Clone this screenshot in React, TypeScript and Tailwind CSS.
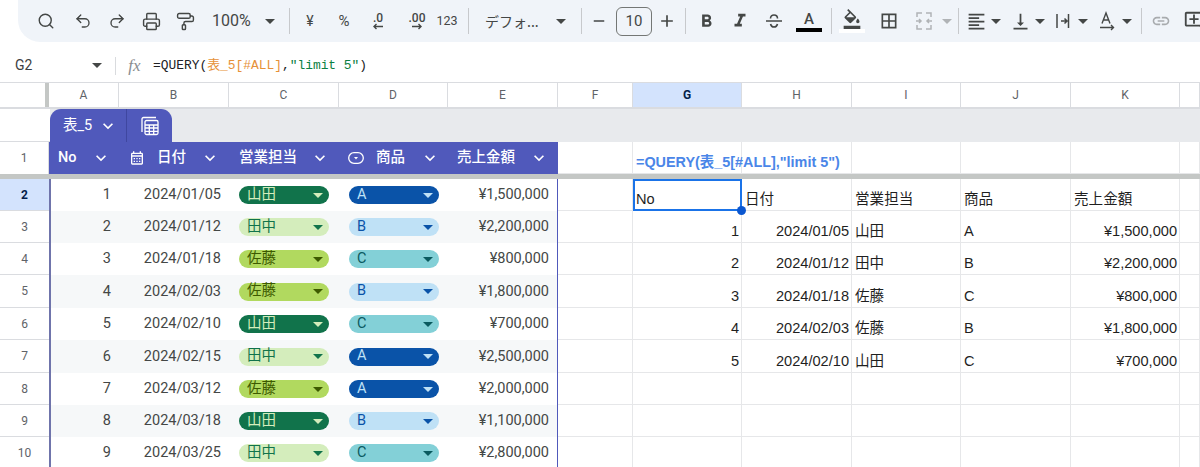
import React from "react";
import { Search, Undo2, Redo2, Printer, PaintRoller } from "lucide-react";
import {
  MdAdd, MdRemove,
  MdFormatBold, MdFormatItalic, MdFormatColorFill, MdOutlineBorderAll, MdFormatAlignLeft,
  MdVerticalAlignBottom, MdLink, MdOutlineAddComment, MdKeyboardArrowDown, MdOutlineCalendarMonth,
} from "react-icons/md";

const rowsData = [
  [1, "2024/01/05", "山田", "A", "¥1,500,000"],
  [2, "2024/01/12", "田中", "B", "¥2,200,000"],
  [3, "2024/01/18", "佐藤", "C", "¥800,000"],
  [4, "2024/02/03", "佐藤", "B", "¥1,800,000"],
  [5, "2024/02/10", "山田", "C", "¥700,000"],
  [6, "2024/02/15", "田中", "A", "¥2,500,000"],
  [7, "2024/03/12", "佐藤", "A", "¥2,000,000"],
  [8, "2024/03/18", "山田", "B", "¥1,100,000"],
  [9, "2024/03/25", "田中", "C", "¥2,800,000"],
] as const;

const pillStyles: Record<string, string> = {
  山田: "bg-[#11734b] text-[#d4edbc]",
  田中: "bg-[#d4edbc] text-[#11734b]",
  佐藤: "bg-[#b1d95f] text-[#3d5a00]",
  A: "bg-[#0a53a8] text-[#bfe1f6]",
  B: "bg-[#bfe1f6] text-[#0a53a8]",
  C: "bg-[#83d0d7] text-[#0a5a5f]",
};
const heights = ["h-[32px]", "h-[32px]", "h-[32px]", "h-[33px]", "h-[32px]", "h-[33px]", "h-[32px]", "h-[32px]", "h-[32px]"];

const Sep = ({ ml }: { ml: string }) => <div className={`w-px h-[26px] bg-[#c7c9cc] shrink-0 ${ml}`} />;
const Caret = ({ cls = "w-[18px]" }: { cls?: string }) => (
  <div className={`${cls} flex justify-center shrink-0 text-[#444746]`}>
    <div className="w-0 h-0 border-l-[5px] border-r-[5px] border-t-[5px] border-l-transparent border-r-transparent border-t-current" />
  </div>
);
const Ico = ({ children, w = "w-[34px]", ml = "" }: { children: React.ReactNode; w?: string; ml?: string }) => (
  <div className={`${w} ${ml} flex items-center justify-center shrink-0 text-[#444746]`}>{children}</div>
);

function Toolbar() {
  return (
    <div className="h-[47px] pl-[18px]">
      <div className="h-[42px] bg-[#f0f4f9] rounded-bl-[22px] pl-[11px] flex items-center overflow-hidden text-[#444746]">
        <Ico><Search size={18} strokeWidth={1.9} /></Ico>
        <Ico ml="ml-[3px]"><Undo2 size={18} strokeWidth={1.8} /></Ico>
        <Ico><Redo2 size={18} strokeWidth={1.8} /></Ico>
        <Ico><Printer size={19} strokeWidth={1.8} /></Ico>
        <Ico><PaintRoller size={19} strokeWidth={1.8} /></Ico>
        <div className="w-[58px] pl-[10px] text-[16px] shrink-0">100%</div>
        <Caret cls="w-[20px]" />
        <Sep ml="ml-[9px]" />
        <Ico ml="ml-[3px]"><span className="text-[14px]">¥</span></Ico>
        <Ico><span className="text-[15px]">%</span></Ico>
        <Ico>
          <div className="flex flex-col items-center leading-[10px] text-[12px] font-medium">
            <span>.0</span>
            <svg width="14" height="7" viewBox="0 0 14 7"><path d="M12 3.5H3M5.5 1L3 3.5 5.5 6" fill="none" stroke="currentColor" strokeWidth="1.4" /></svg>
          </div>
        </Ico>
        <Ico ml="ml-[5px]">
          <div className="flex flex-col items-center leading-[10px] text-[12px] font-medium">
            <span>.00</span>
            <svg width="14" height="7" viewBox="0 0 14 7"><path d="M2 3.5h9M8.5 1L11 3.5 8.5 6" fill="none" stroke="currentColor" strokeWidth="1.4" /></svg>
          </div>
        </Ico>
        <Ico w="w-[26px]"><span className="text-[12.5px]">123</span></Ico>
        <Sep ml="ml-[8px]" />
        <div className="w-[57px] ml-[16px] text-[14px] shrink-0 whitespace-nowrap font-['Noto_Sans_CJK_JP',sans-serif]">デフォ...</div>
        <Caret cls="w-[20px] ml-[9px]" />
        <Sep ml="ml-[10px]" />
        <Ico><MdRemove size={18} /></Ico>
        <div className="w-[36px] h-[29px] border border-[#747775] rounded-[6px] flex items-center justify-center text-[15px] shrink-0">10</div>
        <Ico w="w-[30px]"><MdAdd size={20} /></Ico>
        <Sep ml="ml-[3px]" />
        <Ico ml="ml-[3px]"><MdFormatBold size={21} /></Ico>
        <Ico><MdFormatItalic size={22} /></Ico>
        <Ico>
          <svg width="18" height="18" viewBox="0 0 18 18" fill="none" stroke="currentColor" strokeWidth="1.6">
            <path d="M1 9h16M5.500 6.500C5.500 4 7 3 9 3s3.500 1 3.500 3.500M5.500 12C6 14 7.300 15 9 15s3-1 3.500-3" />
          </svg>
        </Ico>
        <Ico ml="ml-px">
          <div className="flex flex-col items-center w-[26px]">
            <span className="text-[15px] leading-[17px] font-medium">A</span>
            <div className="w-[26px] h-[4px] bg-black" />
          </div>
        </Ico>
        <Sep ml="ml-[5px]" />
        <Ico ml="ml-[3px]">
          <div className="flex flex-col items-center w-[26px]">
            <MdFormatColorFill size={20} />
            <div className="w-[26px] h-[4px] bg-white" />
          </div>
        </Ico>
        <Ico ml="ml-[3px]"><MdOutlineBorderAll size={20} /></Ico>
        <Ico ml="ml-px">
          <svg width="18" height="18" viewBox="0 0 18 18" fill="none" stroke="#b0b3b6" strokeWidth="1.5">
            <path d="M7 1H2v4M11 1h5v4M7 17H2v-4M11 17h5v-4M1 9h5M4 7l2 2-2 2M17 9h-5M14 7l-2 2 2 2" />
          </svg>
        </Ico>
        <Caret cls="w-[20px] -ml-[4px] text-[#b0b3b6]" />
        <Sep ml="ml-px" />
        <Ico w="w-[22px]" ml="ml-[6px]"><MdFormatAlignLeft size={21} /></Ico>
        <Caret />
        <Ico w="w-[22px]" ml="ml-[4px]"><MdVerticalAlignBottom size={21} /></Ico>
        <Caret />
        <Ico w="w-[22px]" ml="ml-[3px]">
          <svg width="18" height="18" viewBox="0 0 18 18" fill="none" stroke="currentColor" strokeWidth="1.5">
            <path d="M3 2v14M14.500 2v14M7 9h6M10.500 6.500L13 9l-2.500 2.500" />
          </svg>
        </Ico>
        <Caret />
        <Ico w="w-[22px]" ml="ml-[4px]">
          <svg width="20" height="20" viewBox="0 0 20 20" fill="none" stroke="currentColor" strokeWidth="1.4">
            <path d="M5 12.500L9 2l4 10.500M6.300 9h5.400M3 16.500h13M14 14l2.500 2.500L14 19" />
          </svg>
        </Ico>
        <Caret />
        <Sep ml="ml-[5px]" />
        <Ico w="w-[22px]" ml="ml-[8px]"><span className="text-[#a8abae] flex"><MdLink size={20} /></span></Ico>
        <Ico w="w-[22px]" ml="ml-[11px]"><MdOutlineAddComment size={22} /></Ico>
      </div>
    </div>
  );
}

function FormulaBar() {
  return (
    <div className="h-[35px] pt-[2px] flex items-center text-[#3c4043]">
      <div className="w-[85px] pl-[15px] text-[14px] shrink-0">G2</div>
      <Caret cls="w-[24px]" />
      <div className="w-px h-[18px] bg-[#d9dbde] ml-[6px]" />
      <div className="w-[37px] text-center text-[#8a8d90] italic text-[17px] shrink-0 font-['Liberation_Serif',serif]">fx</div>
      <div className="text-[12.9px] whitespace-nowrap text-[#202124] font-['Liberation_Mono','Noto_Sans_CJK_JP',monospace]">
        =QUERY(<span className="text-[#e69138]">表_5[#ALL]</span>,<span className="text-[#0b8043]">"limit 5"</span>)
      </div>
    </div>
  );
}

const colW = ["w-[70px]", "w-[110px]", "w-[110px]", "w-[109px]", "w-[110px]"];
const rightW = ["w-[75px]", "w-[109px]", "w-[110px]", "w-[109px]", "w-[110px]", "w-[109px]", "w-[20px]"];

function ColumnHeader() {
  const letters = ["A", "B", "C", "D", "E", "F", "G", "H", "I", "J", "K", ""];
  const widths = [...colW, ...rightW];
  return (
    <div className="h-[27px] flex border-t border-b-2 border-[#dadce0] text-[12px] text-[#5f6368]">
      <div className="w-[49px] shrink-0 border-r-[4px] border-[#c4c7c5]" />
      {letters.map((l, i) => (
        <div
          key={i}
          className={`${widths[i]} shrink-0 flex items-center justify-center border-r border-[#dadce0] ${
            l === "G" ? "bg-[#d3e3fd] text-[#041e49] font-bold" : ""
          }`}
        >
          {l}
        </div>
      ))}
    </div>
  );
}

function TabRow() {
  return (
    <div className="h-[33px] flex">
      <div className="w-[50px] shrink-0 border-b border-[#dadce0]" />
      <div className="flex-1 bg-[#e8eaed] flex">
        <div className="w-[122px] h-[33px] bg-[#5059bb] rounded-t-[11px] flex text-white">
          <div className="w-[77px] flex items-center pl-[13px] border-r border-[#3f47a0] text-[14.5px]">
            <span>表_5</span>
            <MdKeyboardArrowDown size={20} className="ml-[6px]" />
          </div>
          <div className="flex-1 flex items-center justify-center">
            <svg width="20" height="20" viewBox="0 0 20 20" fill="none" stroke="currentColor" strokeWidth="1.3">
              <path d="M2 16V3a1.500 1.500 0 0 1 1.500-1.500H16" />
              <rect x="5" y="4.500" width="13" height="14" rx="1.500" />
              <path d="M5 9h13M5 12h13M5 15.300h13M9.300 9v9.500M13.700 9v9.500" />
            </svg>
          </div>
        </div>
      </div>
    </div>
  );
}

const HeadCell = ({ w, children }: { w: string; children: React.ReactNode }) => (
  <div className={`${w} shrink-0 relative flex items-center`}>{children}</div>
);
const Chev = ({ cls }: { cls: string }) => <MdKeyboardArrowDown size={20} className={`absolute ${cls}`} />;

function HeaderRow() {
  return (
    <div className="h-[32px] flex">
      <div className="w-[49px] shrink-0 flex items-center justify-center text-[12px] text-[#5f6368] border-r border-[#dadce0]">1</div>
      <div className="w-[509px] shrink-0 bg-[#5059bb] text-white text-[14.5px] font-medium flex">
        <HeadCell w="w-[70px]"><span className="ml-[9px]">No</span><Chev cls="left-[42px]" /></HeadCell>
        <HeadCell w="w-[110px]">
          <MdOutlineCalendarMonth size={16} className="ml-[10px]" />
          <span className="ml-[12px]">日付</span>
          <Chev cls="left-[81px]" />
        </HeadCell>
        <HeadCell w="w-[110px]"><span className="ml-[10px]">営業担当</span><Chev cls="left-[81px]" /></HeadCell>
        <HeadCell w="w-[109px]">
          <svg width="16" height="12" viewBox="0 0 16 12" fill="none" className="ml-[9px]">
            <rect x="0.700" y="0.700" width="14.600" height="10.600" rx="5.300" stroke="currentColor" strokeWidth="1.300" />
            <path d="M6 5h4L8 7.500z" fill="currentColor" />
          </svg>
          <span className="ml-[12px]">商品</span>
          <Chev cls="left-[81px]" />
        </HeadCell>
        <HeadCell w="w-[110px]"><span className="ml-[9px]">売上金額</span><Chev cls="left-[81px]" /></HeadCell>
      </div>
      <RightCells>
        {[
          null,
          <span key="f" className="font-bold text-[14.4px] text-[#4a86e8]">=QUERY(表_5[#ALL],"limit 5")</span>,
        ]}
      </RightCells>
    </div>
  );
}

function RightCells({ children, selected }: { children?: React.ReactNode[]; selected?: boolean }) {
  return (
    <>
      {rightW.map((w, i) => {
        const isSel = selected && i === 1;
        return (
          <div
            key={i}
            className={`${w} shrink-0 relative flex items-end text-[14.6px] leading-[20px] text-[#1f1f1f] whitespace-nowrap font-['Liberation_Sans','Noto_Sans_CJK_JP',sans-serif] ${
              isSel
                ? "border-2 border-[#1a73e8] pl-[1px] pr-[2px]"
                : "border-r border-b border-[#e6e7e9] pb-px pl-[3px] pr-[2px]"
            }`}
          >
            {children?.[i]}
            {isSel && <div className="absolute z-10 -right-[6px] -bottom-[6px] w-[9px] h-[9px] rounded-full bg-[#0b57d0]" />}
          </div>
        );
      })}
    </>
  );
}

const Num = ({ children }: { children: React.ReactNode }) => <span className="ml-auto">{children}</span>;

function Pill({ label }: { label: string }) {
  return (
    <div className={`w-[90px] h-[18px] rounded-full flex items-center pl-[8px] pr-[6px] text-[14.5px] leading-none ${pillStyles[label]}`}>
      <span>{label}</span>
      <div className="ml-auto w-0 h-0 border-l-[5px] border-r-[5px] border-t-[5px] border-l-transparent border-r-transparent border-t-current" />
    </div>
  );
}

function DataRow({ idx }: { idx: number }) {
  const r = rowsData[idx];
  const sel = idx === 0;
  const src = idx >= 1 && idx <= 5 ? rowsData[idx - 1] : null;
  return (
    <div className={`${heights[idx]} flex`}>
      <div
        className={`w-[49px] shrink-0 flex items-center justify-center text-[12px] border-b border-[#dadce0] ${
          sel ? "bg-[#d3e3fd] text-[#041e49] font-bold" : "text-[#5f6368]"
        }`}
      >
        {idx + 2}
      </div>
      <div
        className={`w-[509px] shrink-0 flex items-center text-[14.5px] text-[#444746] border-l-2 border-l-[#6f74ab] border-r border-r-[#5059bb] ${
          idx % 2 ? "bg-[#f6f8f9]" : "bg-white"
        }`}
      >
        <div className="w-[61px] text-right pr-[1px] shrink-0">{r[0]}</div>
        <div className="w-[118px] text-right pr-[9px] shrink-0">{r[1]}</div>
        <div className="w-[110px] shrink-0 pl-[9px]"><Pill label={r[2]} /></div>
        <div className="w-[109px] shrink-0 pl-[9px]"><Pill label={r[3]} /></div>
        <div className="flex-1 text-right pr-[8px]">{r[4]}</div>
      </div>
      {sel ? (
        <RightCells selected>{[null, "No", "日付", "営業担当", "商品", "売上金額", null]}</RightCells>
      ) : src ? (
        <RightCells>
          {[null, <Num key="a">{src[0]}</Num>, <Num key="b">{src[1]}</Num>, src[2], src[3], <Num key="c">{src[4]}</Num>, null]}
        </RightCells>
      ) : (
        <RightCells />
      )}
    </div>
  );
}

export default function App() {
  return (
    <div className="w-[1200px] h-[467px] overflow-hidden bg-white font-['Roboto','Noto_Sans_CJK_JP',sans-serif]">
      <Toolbar />
      <FormulaBar />
      <ColumnHeader />
      <TabRow />
      <HeaderRow />
      <div className="h-[5px] bg-[#c4c7c5]" />
      {rowsData.map((_, i) => (
        <DataRow key={i} idx={i} />
      ))}
    </div>
  );
}
